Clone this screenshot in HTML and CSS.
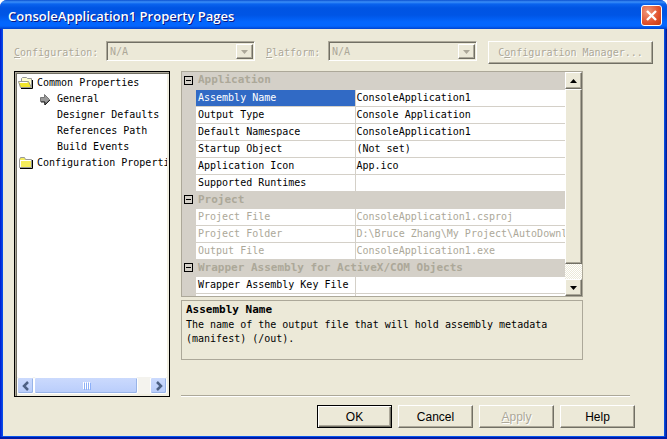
FILE: index.html
```html
<!DOCTYPE html>
<html lang="en">
<head>
<meta charset="utf-8">
<title>ConsoleApplication1 Property Pages</title>
<link rel="stylesheet" href="styles.css">
</head>
<body>
<main class="window">
  <header class="titlebar">
    <h1>ConsoleApplication1 Property Pages</h1>
    <button class="close" aria-label="Close"><svg width="21" height="21" viewBox="0 0 21 21"><path d="M6 6l9 9M15 6l-9 9" stroke="#fff" stroke-width="2.4"/></svg></button>
  </header>
  <div class="content">
    <div class="toolbar">
      <label class="config" for="config"><u>C</u>onfiguration:</label>
      <span class="combo"><select id="config" disabled><option>N/A</option></select><span class="drop"><svg width="7" height="4"><path d="M0 0h7L3.500 4z"/></svg></span></span>
      <label class="platform" for="platform"><u>P</u>latform:</label>
      <span class="combo"><select id="platform" disabled><option>N/A</option></select><span class="drop"><svg width="7" height="4"><path d="M0 0h7L3.500 4z"/></svg></span></span>
      <button class="manager" disabled>C<u>o</u>nfiguration Manager...</button>
    </div>
    <div class="middle">
      <nav class="tree">
        <ul>
          <li><svg width="16" height="14" viewBox="0 0 16 14"><path d="M3.500 11V2.500l1-1h4l1 1h4V11z" fill="#ffffce" stroke="#999"/><path d="M.5 5.500h10l3 6H2.500z" fill="#f1e62e" stroke="#999"/><path d="M1.500 6.500h8" stroke="#fff"/><path d="M3 12.500h11.500V4" fill="none" stroke="#000"/></svg>Common Properties</li>
          <li class="child current"><svg width="10" height="11" viewBox="0 0 10 11"><path d="M.5 3.500h4v-3l5 5-5 5v-3h-4z" fill="#999" stroke="#777"/><path d="M1 8h4v3l5-5" fill="none" stroke="#222"/></svg>General</li>
          <li class="child">Designer Defaults</li>
          <li class="child">References Path</li>
          <li class="child">Build Events</li>
          <li><svg width="16" height="14" viewBox="0 0 16 14"><path d="M1.500 11.500v-8l1-2h4l1 2h6v8z" fill="#f4ec5c" stroke="#999"/><path d="M2.500 4.500H13M2.500 4v7" stroke="#fff"/><path d="M2 12.500h12.500V4" fill="none" stroke="#000"/></svg>Configuration Properties</li>
        </ul>
        <div class="hscroll">
          <button aria-label="Scroll left"><svg width="8" height="10"><path d="M6 1L2 5l4 4" fill="none" stroke="#4d6185" stroke-width="2.500"/></svg></button>
          <span class="hthumb"><i></i><i></i><i></i><i></i></span>
          <button class="last" aria-label="Scroll right"><svg width="8" height="10"><path d="M2 1l4 4-4 4" fill="none" stroke="#4d6185" stroke-width="2.500"/></svg></button>
        </div>
      </nav>
      <section class="details">
        <div class="grid">
          <div class="rows">
            <table>
              <colgroup><col class="gutter"><col class="name"><col></colgroup>
              <tbody>
                <tr class="group"><td><span class="minus"></span></td><th colspan="2">Application</th></tr>
                <tr class="selected"><td></td><td>Assembly Name</td><td>ConsoleApplication1</td></tr>
                <tr><td></td><td>Output Type</td><td>Console Application</td></tr>
                <tr><td></td><td>Default Namespace</td><td>ConsoleApplication1</td></tr>
                <tr><td></td><td>Startup Object</td><td>(Not set)</td></tr>
                <tr><td></td><td>Application Icon</td><td>App.ico</td></tr>
                <tr><td></td><td>Supported Runtimes</td><td></td></tr>
                <tr class="group"><td><span class="minus"></span></td><th colspan="2">Project</th></tr>
                <tr class="muted"><td></td><td>Project File</td><td>ConsoleApplication1.csproj</td></tr>
                <tr class="muted"><td></td><td>Project Folder</td><td>D:\Bruce Zhang\My Project\AutoDownload</td></tr>
                <tr class="muted"><td></td><td>Output File</td><td>ConsoleApplication1.exe</td></tr>
                <tr class="group"><td><span class="minus"></span></td><th colspan="2">Wrapper Assembly for ActiveX/COM Objects</th></tr>
                <tr><td></td><td>Wrapper Assembly Key File</td><td></td></tr>
                <tr><td></td><td></td><td></td></tr>
              </tbody>
            </table>
          </div>
          <div class="vscroll">
            <button aria-label="Scroll up"><svg width="7" height="4"><path d="M0 4h7L3.500 0z"/></svg></button>
            <span class="vthumb"></span>
            <span class="track"></span>
            <button aria-label="Scroll down"><svg width="7" height="4"><path d="M0 0h7L3.500 4z"/></svg></button>
          </div>
        </div>
        <div class="help">
          <h2>Assembly Name</h2>
          <p>The name of the output file that will hold assembly metadata (manifest) (/out).</p>
        </div>
        <hr>
      </section>
    </div>
    <footer class="actions">
      <button class="default">OK</button>
      <button>Cancel</button>
      <button disabled><u>A</u>pply</button>
      <button>Help</button>
    </footer>
  </div>
</main>
</body>
</html>
```
FILE: styles.css
```css
* { box-sizing: border-box; }

body {
  margin: 0;
  font: 10px/16px "DejaVu Sans Mono", monospace;
  color: #000;
  background: #fff;
}

h1, h2, p, ul { margin: 0; padding: 0; }
button { font: inherit; color: inherit; padding: 0; }
svg { display: block; flex: none; }

.window {
  min-height: 100vh;
  display: flex;
  flex-direction: column;
  padding: 0 3px 3px;
  border-radius: 7px 7px 0 0;
  overflow: hidden;
  background: linear-gradient(90deg, #0019cf, #0855ee 3px, #0855ee calc(100% - 3px), #00138c);
  box-shadow: inset 0 -2px #001ba8;
}

.titlebar {
  height: 29px;
  margin: 0 -3px;
  padding: 0 5px 0 8px;
  display: flex;
  align-items: center;
  justify-content: space-between;
  background: linear-gradient(#0a50d0, #3b8ff8 2px, #0a63ee 4px, #0054e3 8px, #0055e5 15px, #0366fe 22px, #0366fe 26px, #0043cf);
}

.titlebar h1 {
  font: 600 13px/20px "Open Sans", sans-serif;
  color: #fff;
  padding-top: 3px;
  text-shadow: 1px 1px #0a1883;
}

.close {
  width: 21px;
  height: 21px;
  margin-top: 2px;
  border: 1px solid #fff;
  border-radius: 3px;
  background: radial-gradient(circle at 30% 30%, #f0997c, #e1512c 60%, #c63a10);
  display: grid;
  place-content: center;
}

.content {
  flex: 1;
  display: flex;
  flex-direction: column;
  padding: 12px 11px 8px;
  background: #ece9d8;
}

.toolbar { display: flex; align-items: flex-start; color: #aca899; text-shadow: 1px 1px #fff; }
.toolbar label { padding-top: 4px; }
.config { width: 92px; }
.platform { width: 62px; margin-left: 11px; }

.combo {
  flex: 1;
  display: flex;
  height: 20px;
  padding: 1px;
  border: 1px solid;
  border-color: #aca899 #fff #fff #aca899;
  box-shadow: inset 1px 1px #716f64;
}
.combo select {
  flex: 1;
  min-width: 0;
  appearance: none;
  border: 0;
  padding: 1px 2px 0;
  background: none;
  font: inherit;
  color: #aca899;
  opacity: 1;
}
.drop { width: 17px; margin-top: 1px; display: grid; place-content: center; fill: #aca899; }
.drop, .manager, .actions button, .vscroll button, .vthumb {
  background: #ece9d8;
  border: 1px solid;
  border-color: #fff #716f64 #716f64 #fff;
  box-shadow: inset -1px -1px #aca899;
}
.manager { width: 165px; height: 23px; margin-left: 11px; text-shadow: inherit; }
button:disabled { color: #aca899; text-shadow: 1px 1px #fff; }

.middle { flex: 1; display: flex; gap: 11px; margin-top: 7px; }

.tree {
  width: 156px;
  display: flex;
  flex-direction: column;
  border: 1px solid #000;
  box-shadow: inset 1px 1px #aca899, inset 2px 2px #716f64, inset -2px -2px #f1efe2;
  background: #fff;
  padding: 3px 2px 2px;
}
.tree ul { flex: 1; list-style: none; overflow: hidden; white-space: nowrap; }
.tree li { height: 16px; display: flex; align-items: center; gap: 3px; padding-left: 1px; }
.tree .child { padding-left: 40px; }
.tree .current { padding-left: 23px; gap: 7px; }

.hscroll { display: flex; height: 17px; background: #f4f3ee; }
.hscroll button, .hthumb {
  width: 17px;
  border: 1px solid #fff;
  border-radius: 2px;
  box-shadow: inset -1px -1px #98b4e8;
  background: linear-gradient(#cbdafd, #b9cdfb);
  display: flex;
  align-items: center;
  justify-content: center;
}
.hthumb { width: 104px; gap: 1px; }
.hthumb i { width: 1px; height: 7px; background: #fff; box-shadow: 1px 1px #8cb0f8; }
.hscroll .last { margin-left: auto; }

.details { flex: 1; min-width: 0; display: flex; flex-direction: column; }
.grid, .help { margin-right: 70px; border: 1px solid #aca899; }
.grid { display: flex; height: 226px; }
.rows { flex: 1; min-width: 0; overflow: hidden; background: #fff; }

table { width: 100%; table-layout: fixed; border-collapse: collapse; }
.gutter { width: 14px; }
.name { width: 159px; }
tr { height: 17px; }
td, th {
  height: 17px;
  padding: 0 1px;
  line-height: 16px;
  text-align: left;
  white-space: nowrap;
  overflow: hidden;
  border-bottom: 1px solid #d4d0c8;
}
td:nth-child(2), th { padding-left: 2px; }
td:nth-child(2) { border-right: 1px solid #d4d0c8; }
td:first-child { background: #d4d0c8; padding-left: 2px; }
.group { background: #d4d0c8; color: #aca899; }
th, h2 { font-size: 11px; font-weight: bold; }
.minus {
  display: block;
  width: 9px;
  height: 9px;
  border: 1px solid #000;
  background: linear-gradient(#000, #000) center / 5px 1px no-repeat;
}
.selected td:nth-child(2) { background: #316ac5; color: #fff; }
.muted { color: #aca899; }

.vscroll { width: 17px; display: flex; flex-direction: column; }
.vscroll button { height: 17px; display: grid; place-content: center; }
.vthumb { flex: 1; }
.track { height: 15px; background: repeating-conic-gradient(#fff 0 25%, #ece9d8 0 50%) 0 0 / 2px 2px; }

.help { height: 60px; margin-top: 3px; padding: 1px 4px; line-height: 14px; }
.help h2 { line-height: 16px; }
.details hr { width: calc(100% - 23px); margin: auto 0 0; border: 0; border-top: 1px solid #aca899; border-bottom: 1px solid #fff; }

.actions { display: flex; justify-content: flex-end; gap: 6px; padding: 8px 18px 0 0; }
.actions button { width: 75px; height: 23px; font: 12px/16px "Liberation Sans", sans-serif; }
.actions .default { border-color: #000; box-shadow: inset 1px 1px #fff, inset -1px -1px #716f64, inset -2px -2px #aca899; }
```
